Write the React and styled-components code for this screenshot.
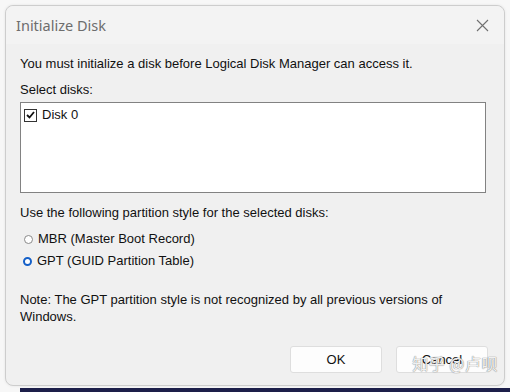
import styled, { createGlobalStyle } from 'styled-components';

const GlobalStyle = createGlobalStyle`
  html, body {
    margin: 0;
    padding: 0;
    background: #f7f7f7;
  }
  body {
    width: 510px;
    height: 392px;
    overflow: hidden;
    font-family: "Liberation Sans", Arial, sans-serif;
  }
`;

const App = () => {
  return (
    <>
      <GlobalStyle />
      <Screen>
        <Dialog>
          <TitleBar>
            <Title>Initialize Disk</Title>
            <CloseButton>
              <svg width="13" height="13" viewBox="0 0 13 13">
                <path d="M1 1 L12 12 M12 1 L1 12" stroke="#707070" strokeWidth="1.1" fill="none" />
              </svg>
            </CloseButton>
          </TitleBar>
          <Body>
            <Text>You must initialize a disk before Logical Disk Manager can access it.</Text>
            <Label>Select disks:</Label>
            <ListBox>
              <ListItem>
                <CheckBox>
                  <svg width="9" height="8" viewBox="0 0 9 8">
                    <path d="M1 4 L3.5 6.5 L8 1" stroke="#111" strokeWidth="1.8" fill="none" />
                  </svg>
                </CheckBox>
                Disk 0
              </ListItem>
            </ListBox>
            <Label $top={11}>Use the following partition style for the selected disks:</Label>
            <RadioRow $top={10}>
              <Radio />
              MBR (Master Boot Record)
            </RadioRow>
            <RadioRow>
              <Radio $checked />
              GPT (GUID Partition Table)
            </RadioRow>
            <Note>
              Note: The GPT partition style is not recognized by all previous versions of Windows.
            </Note>
            <ButtonRow>
              <Button>OK</Button>
              <Button>Cancel</Button>
            </ButtonRow>
          </Body>
          <Watermark>知乎 @卢呗</Watermark>
        </Dialog>
        <Taskbar />
      </Screen>
    </>
  );
};

const Screen = styled.div`
  display: flex;
  flex-direction: column;
  width: 510px;
  height: 392px;
  padding-top: 5px;
  box-sizing: border-box;
`;

const Dialog = styled.div`
  position: relative;
  display: flex;
  flex-direction: column;
  margin-left: 5px;
  width: 500px;
  height: 381px;
  box-sizing: border-box;
  border: 1px solid #cdcdcd;
  border-radius: 8px;
  background: #f0f0f0;
  box-shadow: 0 0 3px rgba(0, 0, 0, 0.08);
`;

const TitleBar = styled.div`
  display: flex;
  align-items: center;
  justify-content: space-between;
  height: 38px;
  padding: 0 14px 0 10px;
  border-radius: 8px 8px 0 0;
  background: #f3f3f3;
`;

const Title = styled.div`
  font-family: "Noto Sans", "Open Sans", sans-serif;
  font-size: 14.5px;
  color: #6d6d6d;
`;

const CloseButton = styled.div`
  display: flex;
  align-items: center;
  justify-content: center;
  width: 16px;
  height: 16px;
`;

const Body = styled.div`
  display: flex;
  flex-direction: column;
  padding: 11px 18px 0 14px;
  font-size: 13px;
  color: #111;
`;

const Text = styled.div`
  line-height: 17px;
`;

const Label = styled.div`
  margin-top: ${(p) => p.$top ?? 9}px;
  line-height: 17px;
`;

const ListBox = styled.div`
  margin-top: 4px;
  height: 91px;
  box-sizing: border-box;
  border: 1px solid #828282;
  background: #fff;
  padding: 4px 3px;
`;

const ListItem = styled.div`
  display: flex;
  align-items: center;
  gap: 5px;
  line-height: 16px;
`;

const CheckBox = styled.div`
  display: flex;
  align-items: center;
  justify-content: center;
  width: 11px;
  height: 11px;
  border: 1px solid #333;
  background: #fff;
`;

const RadioRow = styled.div`
  display: flex;
  align-items: center;
  gap: 5px;
  margin-top: ${(p) => p.$top ?? 6}px;
  padding-left: 3px;
  line-height: 16px;
`;

const Radio = styled.div`
  width: ${(p) => (p.$checked ? 5 : 7)}px;
  height: ${(p) => (p.$checked ? 5 : 7)}px;
  border-radius: 50%;
  border: ${(p) => (p.$checked ? '2.5px solid #1560c8' : '1px solid #8a8a8a')};
  background: #fff;
  margin: 0 0 0 ${(p) => (p.$checked ? 0 : 1)}px;
`;

const Note = styled.div`
  margin-top: 22px;
  width: 440px;
  line-height: 17px;
`;

const ButtonRow = styled.div`
  display: flex;
  justify-content: flex-end;
  gap: 14px;
  margin-top: 21px;
  margin-right: -2px;
`;

const Button = styled.div`
  display: flex;
  align-items: center;
  justify-content: center;
  width: 92px;
  height: 27px;
  box-sizing: border-box;
  border: 1px solid #dedede;
  border-radius: 3px;
  background: #fdfdfd;
  font-size: 13px;
  color: #111;
`;

const Watermark = styled.div`
  position: absolute;
  right: 6px;
  bottom: 10px;
  font-family: "Noto Sans CJK SC", sans-serif;
  font-size: 16px;
  color: rgba(255, 255, 255, 0.9);
  text-shadow: 0 0 1px #888, 0 0 1px #888;
  letter-spacing: 0.5px;
`;

const Taskbar = styled.div`
  margin-top: 2px;
  margin-left: 20px;
  height: 4px;
  background: #1d1f4a;
`;

export default App;
